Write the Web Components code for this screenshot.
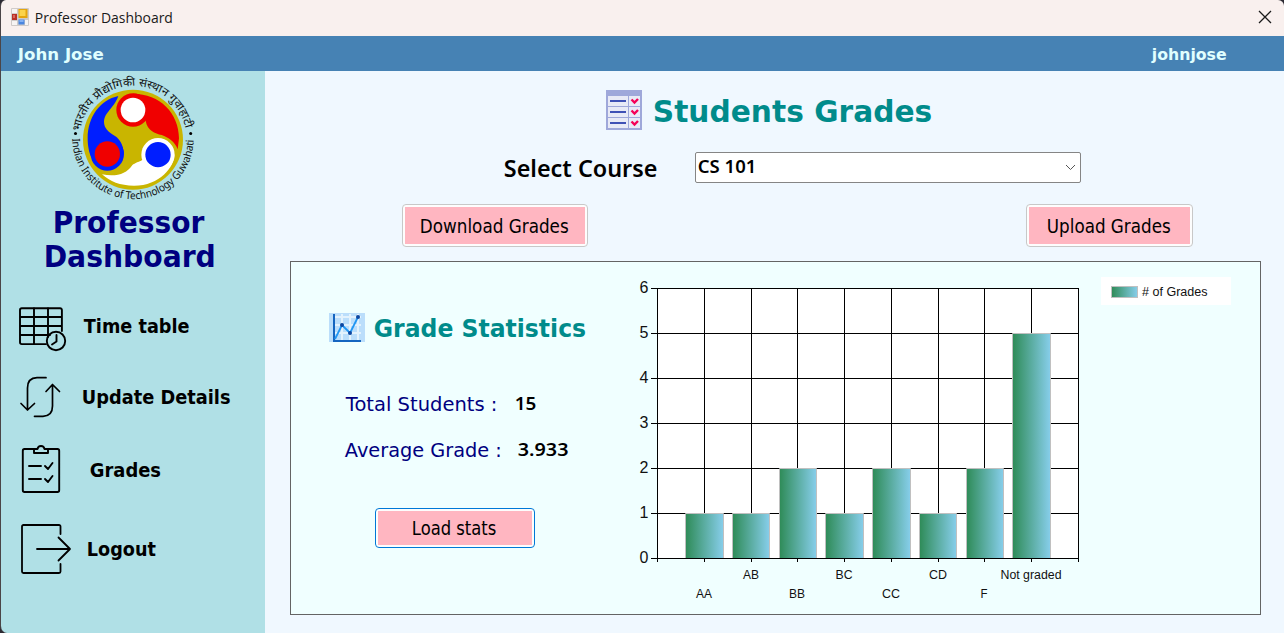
<!DOCTYPE html>
<html lang="en">
<head>
<meta charset="utf-8">
<title>Professor Dashboard</title>
<style>
html,body{margin:0;height:100%;background:#2c2a33;overflow:hidden}
</style>
</head>
<body>
<app-window></app-window>
<script>
const FONTS={
  wide:'"DejaVu Sans", sans-serif',
  narrow:'"DejaVu Sans Condensed", "DejaVu Sans", sans-serif',
  human:'"Noto Sans", "Open Sans", sans-serif',
  ui:'"Open Sans", "Noto Sans", sans-serif'
};
const define=(name,html,init)=>{
  const t=document.createElement('template');t.innerHTML=html;
  customElements.define(name,class extends HTMLElement{
    constructor(){super();this.attachShadow({mode:'open'}).append(t.content.cloneNode(true));}
    connectedCallback(){if(init)init.call(this,this.shadowRoot);}
  });
};

/* One line of text whose inked width is set by the "w" attribute. */
const ctx=document.createElement('canvas').getContext('2d');
define('fit-text',`<style>:host{display:block;flex:none;white-space:nowrap}span{display:inline-block;transform-origin:0 50%}</style><span><slot></slot></span>`,
function(root){
  const g=n=>this.getAttribute(n),w=+g('w'),size=g('size'),weight=g('weight')||400,fam=FONTS[g('face')||'wide'];
  ctx.font=`${weight} ${size}px ${fam}`;
  const m=ctx.measureText(this.textContent),ink=m.actualBoundingBoxRight+m.actualBoundingBoxLeft,k=w/ink;
  this.style.cssText=`width:${w}px;height:${g('lh')||34}px;font:${weight} ${size}px/${g('lh')||34}px ${fam}`;
  root.querySelector('span').style.transform=`translateX(${m.actualBoundingBoxLeft*k-.2}px) scaleX(${k})`;
});

define('title-bar',`<style>
:host{display:flex;height:36px;background:#f9f0ee;align-items:center;padding:0 12px 0 10px;box-sizing:border-box}
fit-text{margin-left:7px;margin-top:-2px;color:#1a1a1a}
.app{margin-top:-2px}.x{margin-left:auto;margin-top:-2px}
</style>
<svg class="app" width="18" height="18" viewBox="0 0 18 18"><rect width="18" height="18" rx="1" fill="#cfcac8"/><rect x="1" y="1" width="5" height="4" fill="#f7f4f3"/><rect x="1" y="13" width="5" height="4" fill="#f7f4f3"/><rect x="14" y="12" width="3" height="5" fill="#f7f4f3"/><rect x="1" y="6" width="5" height="6" fill="#b92f27"/><rect x="2" y="7" width="2" height="3" fill="#d9675c"/><rect x="7.5" y="1" width="9" height="9" fill="#e5a50e"/><rect x="8.5" y="2" width="6" height="6" fill="#fbd34a"/><rect x="7.500" y="11.500" width="6" height="5" fill="#4a86e0"/><rect x="8.500" y="12" width="4" height="2" fill="#83b1f4"/></svg>
<fit-text face="ui" size="15" w="136">Professor Dashboard</fit-text>
<svg class="x" width="14" height="14" viewBox="0 0 14 14"><path d="M1 1l12 12M13 1L1 13" stroke="#1a1a1a" stroke-width="1.3"/></svg>`);

define('user-bar',`<style>
:host{display:flex;justify-content:space-between;height:35px;background:#4682b4;color:#e0ffff;padding:2px 57px 0 15.500px;box-sizing:border-box}
</style><fit-text size="16" weight="700" w="87">John Jose</fit-text><fit-text size="16" weight="700" w="76">johnjose</fit-text>`);

define('institute-logo',`<style>:host{display:block;height:135px}svg{display:block}text{font-family:"Noto Sans","Noto Sans Devanagari",sans-serif;fill:#111}</style>
<svg width="264" height="135" viewBox="1 71 264 135">
<defs><path id="top" d="M80 131.500A53.600 53.600 0 0 1 186 131.500"/><path id="bot" d="M72.300 138.500A60.700 60.700 0 0 0 193.700 138.500"/></defs>
<circle cx="133" cy="139.700" r="50" fill="#c9b500"/>
<g transform="translate(60 70) scale(.33333)">
<path d="M175 78C120 90 83 140 83 205C83 230 88 250 94 262L191 250C190 225 180 208 165 198C145 185 132 175 132 155C134 125 160 118 175 78Z" fill="#001eff"/>
<circle cx="142" cy="252" r="50" fill="#001eff"/>
<path d="M219 71C300 71 357 130 357 205L353 238C345 215 325 202 305 195C285 190 262 182 257 152L219 120Z" fill="#f00000"/>
<circle cx="219" cy="120" r="50" fill="#f00000"/>
<path d="M126 313C170 322 200 310 215 288C220 280 232 278 247 270L343 254C343 290 300 347 222 347C180 347 150 335 126 313Z" fill="#fff"/>
<circle cx="294" cy="254" r="50" fill="#fff"/>
<circle cx="219" cy="120" r="37" fill="#fff"/><circle cx="142" cy="252" r="38" fill="#f00000"/><circle cx="294" cy="254" r="38" fill="#001eff"/>
</g>
<text font-size="11.300"><textPath href="#top" textLength="149" lengthAdjust="spacingAndGlyphs">भारतीय प्रौद्योगिकी संस्थान गुवाहाटी</textPath></text>
<text font-size="10.800"><textPath href="#bot" textLength="189" lengthAdjust="spacingAndGlyphs">Indian Institute of Technology Guwahati</textPath></text>
<circle cx="75.500" cy="133.500" r="1.500"/><circle cx="190.700" cy="133.500" r="1.500"/>
</svg>`);

const ICONS={
 table:`<path d="M44.900 28V7A1.800 1.800 0 0 0 43.100 5.200H4.800A1.800 1.800 0 0 0 3 7V39.300A1.800 1.800 0 0 0 4.800 41.100H29M3 14H45M3 23H45M3 32H33M17 5V41M31 5V34"/><circle cx="39" cy="38" r="9.200"/><path d="M39.500 32V38.500L35 41.500"/>`,
 update:`<path d="M29 5.700H20Q10.500 6 10.500 16V38M4 31.500L10.500 38L17.500 31.500M17.500 44.300H26Q35.500 44 35.500 34V12.500M29 19.500L35.500 12.500L42.500 19.500" stroke-width="1.700"/>`,
 grades:`<path d="M17 5H7.500A1.700 1.700 0 0 0 5.800 6.700V46.300A1.700 1.700 0 0 0 7.500 48H40.500A1.700 1.700 0 0 0 42.200 46.300V6.700A1.700 1.700 0 0 0 40.500 5H31M17 5V9H31V5H27.500Q27 2 24 2T20.500 5ZM12 22H24M12 35H24M28 22L31 25L35.500 19M28 35L31 38L35.500 32"/>`,
 logout:`<path d="M43.500 10V2.500A1.500 1.500 0 0 0 42 1H6.500A1.500 1.500 0 0 0 5 2.500V47.500A1.500 1.500 0 0 0 6.500 49H42A1.500 1.500 0 0 0 43.500 47.500V40M20 25H53M41.500 13.500L53 25L41.500 36.500" stroke-width="1.800"/>`
};
define('nav-item',`<style>:host{display:flex;align-items:center;height:50px;padding-left:16px;color:#000}svg{flex:none}::slotted(*){margin-left:calc(var(--tx) - 73px);margin-top:var(--dy,0px)}</style>
<svg width="56" height="50" viewBox="0 0 56 50" fill="none" stroke="#000" stroke-width="1.900" stroke-linecap="round" stroke-linejoin="round"></svg><slot></slot>`,
function(root){root.querySelector('svg').innerHTML=ICONS[this.getAttribute('icon')];});

define('side-bar',`<style>
:host{display:block;width:264px;flex:none;background:#b0e0e6}
.h{display:flex;flex-direction:column;align-items:center;color:navy;padding-right:6px}
nav{display:flex;flex-direction:column}
.a{margin-top:29px;--tx:84.300px;--dy:-5px}.b{margin-top:19px;--tx:83px}.c{margin-top:22px;--tx:90.200px;--dy:1px}.d{margin-top:30px;--tx:88px}
</style>
<institute-logo></institute-logo>
<div class="h"><fit-text size="29.300" weight="700" face="narrow" w="149.500">Professor</fit-text><fit-text size="29.300" weight="700" face="narrow" w="168">Dashboard</fit-text></div>
<nav>
<nav-item class="a" icon="table"><fit-text size="20" weight="700" face="narrow" w="105.500">Time table</fit-text></nav-item>
<nav-item class="b" icon="update"><fit-text size="20" weight="700" face="narrow" w="147">Update Details</fit-text></nav-item>
<nav-item class="c" icon="grades"><fit-text size="20" weight="700" face="narrow" w="70.500">Grades</fit-text></nav-item>
<nav-item class="d" icon="logout"><fit-text size="20" weight="700" face="narrow" w="68.500">Logout</fit-text></nav-item>
</nav>`);

define('push-button',`<style>
:host{display:flex;box-sizing:border-box;border:1px solid var(--edge,#c8c8c8);border-radius:4px;background:#fdfdfd;padding:2px;color:#000}
div{flex:1;display:flex;align-items:center;justify-content:center;background:#ffb6c1;padding-top:var(--drop,1px)}
</style><div><slot></slot></div>`);

define('course-select',`<style>
:host{display:flex;box-sizing:border-box;width:386px;height:31px;border:1px solid #858585;border-radius:2px;background:#fff;align-items:center;justify-content:space-between;padding:0 4px 0 2.500px}
fit-text{margin-top:-2px}
</style><fit-text face="human" size="17.300" weight="600" w="55.500" lh="28">CS 101</fit-text>
<svg width="11" height="7" viewBox="0 0 11 7"><path d="M1 1l4.500 4.500L10 1" fill="none" stroke="#555"/></svg>`);

/* Column chart: one column for each grade, value axis 0 to 6. */
define('grade-chart',`<style>:host{display:block}svg{display:block}text{font-family:"Liberation Sans",Arial,sans-serif;fill:#111}</style>
<svg width="640" height="352" viewBox="620 262 640 352"></svg>`,
function(root){
  const data=[['AA',1,685,724,16],['AB',1,732,770,16],['BB',2,779,817,16],['BC',1,825,864,17],['CC',2,872,911,18],['CD',1,919,957,18],['F',2,966,1004,7],['Not graded',5,1012,1051,61]];
  const ticks=[657,704,751,797,844,891,938,984,1031,1078];
  let s='<defs><linearGradient id="g"><stop offset="0" stop-color="#2e8b57"/><stop offset="1" stop-color="#87ceeb"/></linearGradient></defs><rect x="657" y="288" width="422" height="271" fill="#fff"/>';
  for(let i=0;i<7;i++){const y=558-45*i;s+=`<rect x="651" y="${y}" width="428" height="1"/><text x="648.300" y="${y+5}" font-size="16" text-anchor="end">${i}</text>`;}
  ticks.forEach(x=>s+=`<rect x="${x}" y="288" width="1" height="274"/>`);
  data.forEach(([n,v,a,b,w],i)=>{
    const y=558-45*v;
    s+=`<rect x="${a+.5}" y="${y+.5}" width="${b-a-1}" height="${45*v-.5}" fill="url(#g)"/><path d="M${a+.5} 558V${y+.5}H${b-.5}V558" fill="none" stroke="#c0c0c0"/>`;
    s+=`<text x="${ticks[i+1]}" y="${i%2?579:598}" font-size="12.500" text-anchor="middle" textLength="${w}" lengthAdjust="spacingAndGlyphs">${n}</text>`;
  });
  s+='<rect x="651" y="558" width="428" height="1"/><rect x="1101" y="277" width="130" height="28" fill="#fff"/><rect x="1111.500" y="286.500" width="26" height="11" fill="url(#g)" stroke="#c0c0c0"/><text x="1142" y="296" font-size="12.500" textLength="65.500" lengthAdjust="spacingAndGlyphs"># of Grades</text>';
  root.querySelector('svg').innerHTML=s;
});

define('stats-panel',`<style>
:host{display:flex;box-sizing:border-box;width:971px;height:354px;border:1px solid #646464;background:#f0ffff;justify-content:space-between}
.l{width:329px;flex:none;padding:51px 0 0 38px;box-sizing:border-box}
.h{display:flex;align-items:center;color:#008b8b;gap:10.300px;height:30px;margin-bottom:45px}
.h svg{margin-top:-1px}.h fit-text{margin-top:2px}
.r{display:flex;align-items:center;height:34px;margin-left:16.200px;color:navy;gap:20.200px}
.r+.r{margin-top:12px;gap:17.500px}.r .v{color:#000;margin-top:-4px}
push-button{width:160px;height:40px;margin:40px 0 0 46px;--edge:#0078d7;--drop:0px}
</style>
<div class="l">
<div class="h"><svg width="36" height="29" viewBox="0 0 36 29"><rect width="36" height="29" fill="#bbdefb"/><path d="M13 1V27M21 1V27M29 1V27M5 4H32M5 12H32M5 20H32" stroke="#e3f2fd" stroke-width="2"/><path d="M5 1V28H32" fill="none" stroke="#1565c0" stroke-width="2"/><path d="M6 26L13 12L21 20L29 4" fill="none" stroke="#2196f3" stroke-width="1.800"/><g fill="#0d47a1"><circle cx="13" cy="12" r="2"/><circle cx="21" cy="20" r="2"/><circle cx="29" cy="4" r="2"/></g></svg>
<fit-text size="24" weight="700" w="211">Grade Statistics</fit-text></div>
<div class="r"><fit-text size="19.500" w="151">Total Students :</fit-text><fit-text class="v" face="human" size="18.600" weight="600" w="20">15</fit-text></div>
<div class="r"><fit-text size="19.500" w="155.500">Average Grade :</fit-text><fit-text class="v" face="human" size="18.600" weight="600" w="50">3.933</fit-text></div>
<push-button><fit-text size="19" face="narrow" w="83.500">Load stats</fit-text></push-button>
</div>
<grade-chart></grade-chart>`);

define('grades-page',`<style>
:host{display:block;flex:1;background:#f0f8ff}
.t,.s,.b{display:flex;align-items:center}
.t{height:81px;padding-left:341px;color:#008b8b;gap:13.300px}.t svg{margin-top:-3px}.t fit-text{margin-top:1px}
.s{height:31px;padding-left:240.300px;gap:37.700px;color:#000}.s fit-text{margin-top:2px}
.b{margin-top:21px;padding:0 91px 0 137px;justify-content:space-between}
.b push-button{height:43px;width:186px}.b push-button+push-button{width:167px}
stats-panel{margin:14px 0 0 25px}
</style>
<div class="t"><svg width="36" height="40" viewBox="0 0 36 40"><rect width="36" height="40" fill="#9fa8da"/><g fill="#e8eaf6"><rect x="2" y="6" width="20" height="10"/><rect x="23" y="6" width="11" height="10"/><rect x="2" y="17" width="20" height="10"/><rect x="23" y="17" width="11" height="10"/><rect x="2" y="28" width="20" height="10"/><rect x="23" y="28" width="11" height="10"/></g><path d="M4 11H20M4 22H20M4 33H20" stroke="#3f51b5" stroke-width="2"/><path d="M25.500 9.500L28.500 12.500L32 9M25.500 20.500L28.500 23.500L32 20M25.500 31.500L28.500 34.500L32 31" fill="none" stroke="#f50057" stroke-width="2.400"/></svg>
<fit-text size="29.300" weight="700" w="277">Students Grades</fit-text></div>
<div class="s"><fit-text face="human" size="23.300" weight="600" w="152" lh="31">Select Course</fit-text><course-select></course-select></div>
<div class="b"><push-button><fit-text size="19" face="narrow" w="148">Download Grades</fit-text></push-button><push-button><fit-text size="19" face="narrow" w="123">Upload Grades</fit-text></push-button></div>
<stats-panel></stats-panel>`);

define('app-window',`<style>
:host{display:flex;flex-direction:column;height:633px;width:1284px;box-sizing:border-box;border-left:1px solid #4b4547;border-radius:6px 6px 0 7px;overflow:hidden}
.m{display:flex;flex:1}
</style><title-bar></title-bar><user-bar></user-bar><div class="m"><side-bar></side-bar><grades-page></grades-page></div>`);
</script>
</body>
</html>
